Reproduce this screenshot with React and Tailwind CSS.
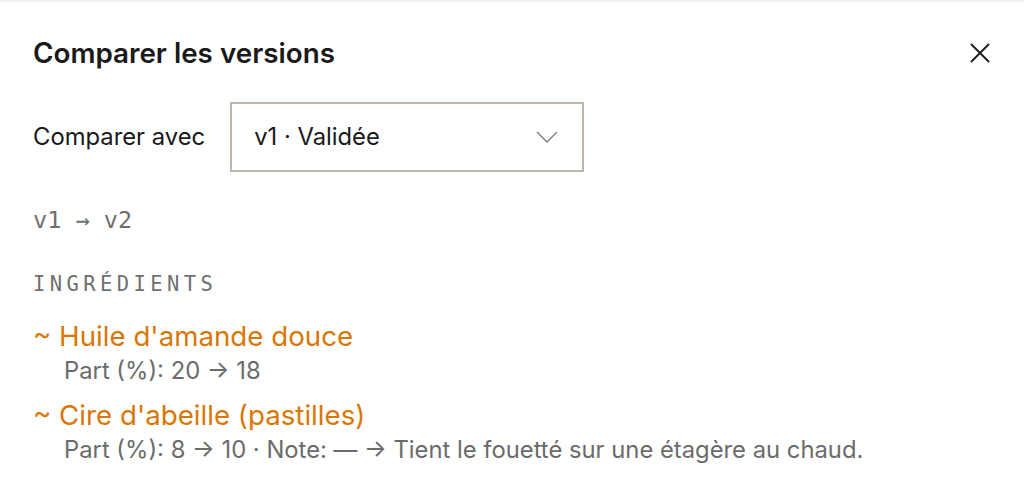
import React from "react";

const changes = [
  { name: "Huile d'amande douce", detail: "Part (%): 20 → 18" },
  {
    name: "Cire d'abeille (pastilles)",
    detail: "Part (%): 8 → 10 · Note: — → Tient le fouetté sur une étagère au chaud.",
  },
];

export default function App() {
  return (
    <div className="min-h-[500px] w-[1024px] border-t-2 border-[#f0f0f0] bg-white font-['Inter',sans-serif] text-[#1a1a1a]">
      {/* Header */}
      <div className="flex items-center justify-between pl-[33px] pr-[34px] pt-[33px]">
        <h2 className="text-[27.8px] font-semibold leading-[36px]">Comparer les versions</h2>
        <button className="text-[#222]">
          <svg width="20" height="20" viewBox="0 0 20 20" fill="none" stroke="currentColor" strokeWidth="2">
            <path d="M1 1 L19 19 M19 1 L1 19" />
          </svg>
        </button>
      </div>

      {/* Version picker */}
      <div className="mt-[31px] flex items-center gap-[25px] pl-[33px]">
        <span className="text-[23.8px]">Comparer avec</span>
        <div className="flex h-[70px] w-[354px] items-center justify-between border-2 border-[#bdb7ae] pl-[22px] pr-[24px]">
          <span className="text-[23.8px]">v1 · Validée</span>
          <svg width="22" height="12" viewBox="0 0 22 12" fill="none" stroke="#808080" strokeWidth="1.4">
            <path d="M1 1 L11 11 L21 1" />
          </svg>
        </div>
      </div>

      <div className="mt-[32px] pl-[33px] font-['DejaVu_Sans_Mono',monospace] text-[23.5px] leading-[32px] text-[#6f6f6f]">
        v1 → v2
      </div>

      <div className="mt-[34px] pl-[33px] font-['DejaVu_Sans_Mono',monospace] text-[20.5px] leading-[28px] tracking-[4.4px] text-[#6f6f6f]">
        INGRÉDIENTS
      </div>

      {/* Ingredient changes */}
      <div className="mt-[21px] flex flex-col gap-[10px] pl-[33px]">
        {changes.map((c) => (
          <div key={c.name}>
            <div className="text-[27.7px] leading-[34px] text-[#d97706]">~ {c.name}</div>
            <div className="mt-[1px] pl-[31px] text-[23.8px] leading-[34px] text-[#6b6b6b]">{c.detail}</div>
          </div>
        ))}
      </div>
    </div>
  );
}
